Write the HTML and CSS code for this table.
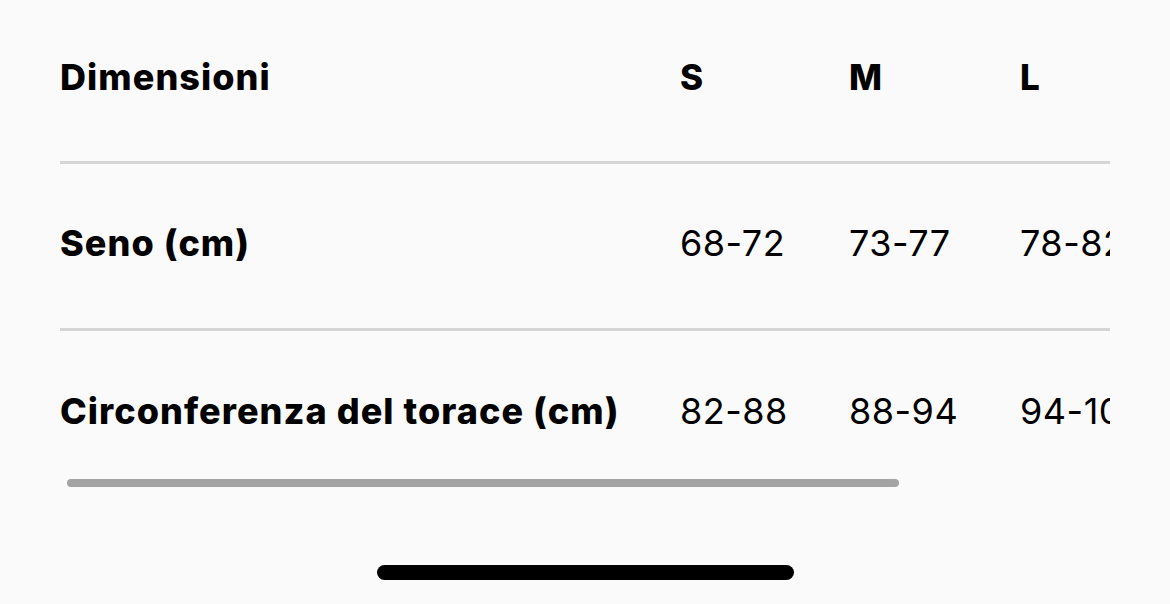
FILE: index.html
```html
<!DOCTYPE html>
<html lang="it">
<head>
<meta charset="utf-8">
<title>Dimensioni</title>
<link rel="stylesheet" href="styles.css">
</head>
<body>
<div class="page">
  <div class="scroller">
    <div class="table">
      <div class="row head">
        <div class="label">Dimensioni</div>
        <div class="size">S</div>
        <div class="size">M</div>
        <div class="size">L</div>
        <div class="size">XL</div>
      </div>
      <div class="row">
        <div class="label">Seno (cm)</div>
        <div class="val">68-72</div>
        <div class="val">73-77</div>
        <div class="val">78-82</div>
        <div class="val">83-87</div>
      </div>
      <div class="row last">
        <div class="label">Circonferenza del torace (cm)</div>
        <div class="val">82-88</div>
        <div class="val">88-94</div>
        <div class="val">94-100</div>
        <div class="val">100-106</div>
      </div>
    </div>
    <div class="scrollbar"></div>
  </div>
  <div class="home-indicator"></div>
</div>
</body>
</html>
```
FILE: styles.css
```css
html, body {
  margin: 0;
  padding: 0;
  background: #fafafa;
}
body {
  font-family: Inter, "Liberation Sans", sans-serif;
  color: #000;
}
.page {
  position: relative;
  width: 1170px;
  height: 604px;
  padding-left: 60px;
  box-sizing: border-box;
  overflow: hidden;
}
.scroller {
  position: relative;
  width: 1050px;
  overflow: hidden;
}
.table {
  width: 1320px;
}
.row {
  display: grid;
  grid-template-columns: 620px 169px 171px 180px 180px;
  align-items: center;
  height: 167px;
  border-bottom: 3px solid #d5d5d5;
  box-sizing: border-box;
  padding-bottom: 6px;
}
.row.head {
  height: 164px;
  padding-bottom: 7px;
}
.row.last {
  border-bottom: none;
  height: 164px;
  padding-bottom: 4px;
}
.label {
  font-weight: 800;
  font-size: 36px;
  letter-spacing: 1.05px;
}
.size {
  font-weight: 800;
  font-size: 35px;
}
.val {
  font-weight: 400;
  font-size: 36px;
  letter-spacing: 0.5px;
}
.scrollbar {
  position: absolute;
  left: 7px;
  bottom: 8px;
  width: 832px;
  height: 8px;
  border-radius: 4px;
  background: #a3a3a3;
}
.home-indicator {
  position: absolute;
  left: 50%;
  bottom: 24px;
  width: 417px;
  height: 15px;
  margin-left: -208px;
  border-radius: 8px;
  background: #000;
}
```
